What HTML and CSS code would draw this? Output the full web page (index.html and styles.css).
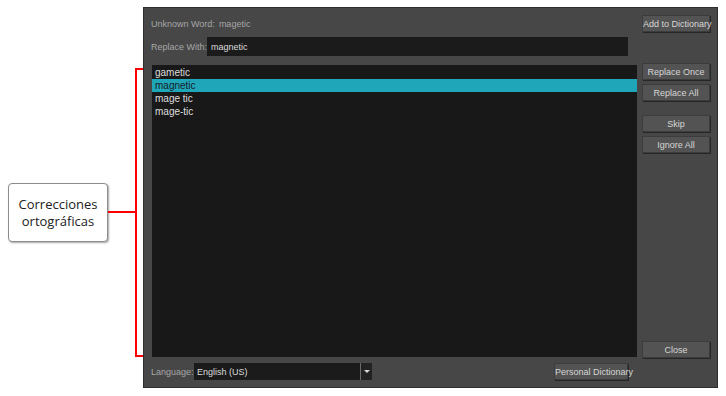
FILE: index.html
```html
<!DOCTYPE html>
<html lang="es">
<head>
    <meta charset="UTF-8">
    <title>Spell Check</title>
    <link rel="stylesheet" href="styles.css">
</head>
<body>

    <!-- Callout annotation -->
    <div class="callout">
        <div class="callout-box">Correcciones<br>ortográficas</div>
        <div class="callout-stub"></div>
        <div class="bracket"></div>
    </div>

    <!-- Spell check dialog -->
    <div class="dialog">
        <div class="row row-top">
            <div class="main">
                <span class="label">Unknown Word:</span>
                <span class="value">magetic</span>
            </div>
            <div class="side">
                <button class="btn">Add to Dictionary</button>
            </div>
        </div>

        <div class="row row-replace">
            <div class="main">
                <span class="label label-replace">Replace With:</span>
                <div class="field">magnetic</div>
            </div>
        </div>

        <div class="row row-body">
            <ul class="suggestions">
                <li>gametic</li>
                <li class="selected">magnetic</li>
                <li>mage tic</li>
                <li>mage-tic</li>
            </ul>
            <div class="side side-buttons">
                <button class="btn">Replace Once</button>
                <button class="btn">Replace All</button>
                <button class="btn btn-gap">Skip</button>
                <button class="btn">Ignore All</button>
                <button class="btn btn-close">Close</button>
            </div>
        </div>

        <div class="row row-bottom">
            <div class="main">
                <span class="label label-language">Language:</span>
                <div class="dropdown">
                    <span>English (US)</span>
                    <span class="dropdown-arrow"></span>
                </div>
                <button class="btn btn-personal">Personal Dictionary</button>
            </div>
        </div>
    </div>

</body>
</html>
```

FILE: styles.css
```css
/* --- Page --- */
body {
    margin: 0;
    background: #fff;
    width: 726px;
    height: 396px;
    position: relative;
    overflow: hidden;
    font-family: "Liberation Sans", Arial, sans-serif;
}

/* --- Callout annotation --- */
.callout {
    position: absolute;
    left: 0;
    top: 0;
}

.callout-box {
    position: absolute;
    left: 8px;
    top: 183px;
    width: 98px;
    height: 57px;
    background: #fff;
    border: 1px solid #8c8c8c;
    border-radius: 4px;
    box-shadow: 1px 1px 2px rgba(0, 0, 0, 0.35);
    display: flex;
    align-items: center;
    justify-content: center;
    text-align: center;
    font-family: "Open Sans", sans-serif;
    font-size: 13px;
    line-height: 17px;
    color: #222;
}

.callout-stub {
    position: absolute;
    left: 108px;
    top: 211px;
    width: 28px;
    height: 2px;
    background: #f00;
}

.bracket {
    position: absolute;
    left: 135px;
    top: 68px;
    width: 15px;
    height: 285px;
    border: 2px solid #f00;
    border-right: none;
}

/* --- Dialog --- */
.dialog {
    position: absolute;
    left: 143px;
    top: 7px;
    width: 559px;
    height: 365px;
    padding: 7px;
    background: #474747;
    border: 1px solid #2e2e2e;
    display: flex;
    flex-direction: column;
    font-family: "Liberation Sans", Arial, sans-serif;
    font-size: 9px;
    color: #a6a6a6;
    white-space: nowrap;
}

.row {
    display: flex;
    gap: 5px;
}

.main {
    flex: 1;
    display: flex;
    align-items: center;
}

.side {
    width: 68px;
    display: flex;
    flex-direction: column;
}

.row-top {
    height: 17px;
}

.row-top .value {
    margin-left: 4px;
}

.row-replace {
    height: 19px;
    margin-top: 5px;
    padding-right: 82px;
}

.label-replace {
    width: 56px;
}

.field {
    flex: 1;
    height: 19px;
    background: #1b1b1b;
    color: #dcdcdc;
    display: flex;
    align-items: center;
    padding-left: 4px;
}

.row-body {
    flex: 1;
    margin-top: 7px;
}

.suggestions {
    flex: 1;
    list-style: none;
    margin: 2px 0 1px 1px;
    padding: 1px 0;
    background: #181818;
    font-size: 10px;
    color: #dedede;
}

.suggestions li {
    height: 13px;
    line-height: 13px;
    padding-left: 3px;
}

.suggestions li.selected {
    background: #20a6b9;
    color: #15202a;
}

.side-buttons {
    gap: 4px;
}

.btn {
    height: 17px;
    padding: 0;
    background: #535353;
    border: 1px solid #3c3c3c;
    box-shadow: 1px 1px 0 #262626;
    color: #d6d6d6;
    font-family: "Liberation Sans", Arial, sans-serif;
    font-size: 9px;
    white-space: nowrap;
    cursor: pointer;
}

.btn-gap {
    margin-top: 10px;
}

.btn-close {
    margin-top: auto;
}

.row-bottom {
    height: 17px;
    margin-top: 5px;
    padding-right: 82px;
}

.label-language {
    width: 43px;
}

.dropdown {
    width: 178px;
    height: 17px;
    background: #1b1b1b;
    color: #dcdcdc;
    display: flex;
    align-items: center;
    padding-left: 3px;
    box-sizing: border-box;
}

.dropdown span:first-child {
    flex: 1;
}

.dropdown-arrow {
    width: 11px;
    height: 17px;
    border-left: 1px solid #6a6a6a;
    background: #222;
    position: relative;
}

.dropdown-arrow::after {
    content: "";
    position: absolute;
    left: 3px;
    top: 7px;
    border-left: 3px solid transparent;
    border-right: 3px solid transparent;
    border-top: 3px solid #d8d8d8;
}

.btn-personal {
    margin-left: auto;
    width: 74px;
}
```
